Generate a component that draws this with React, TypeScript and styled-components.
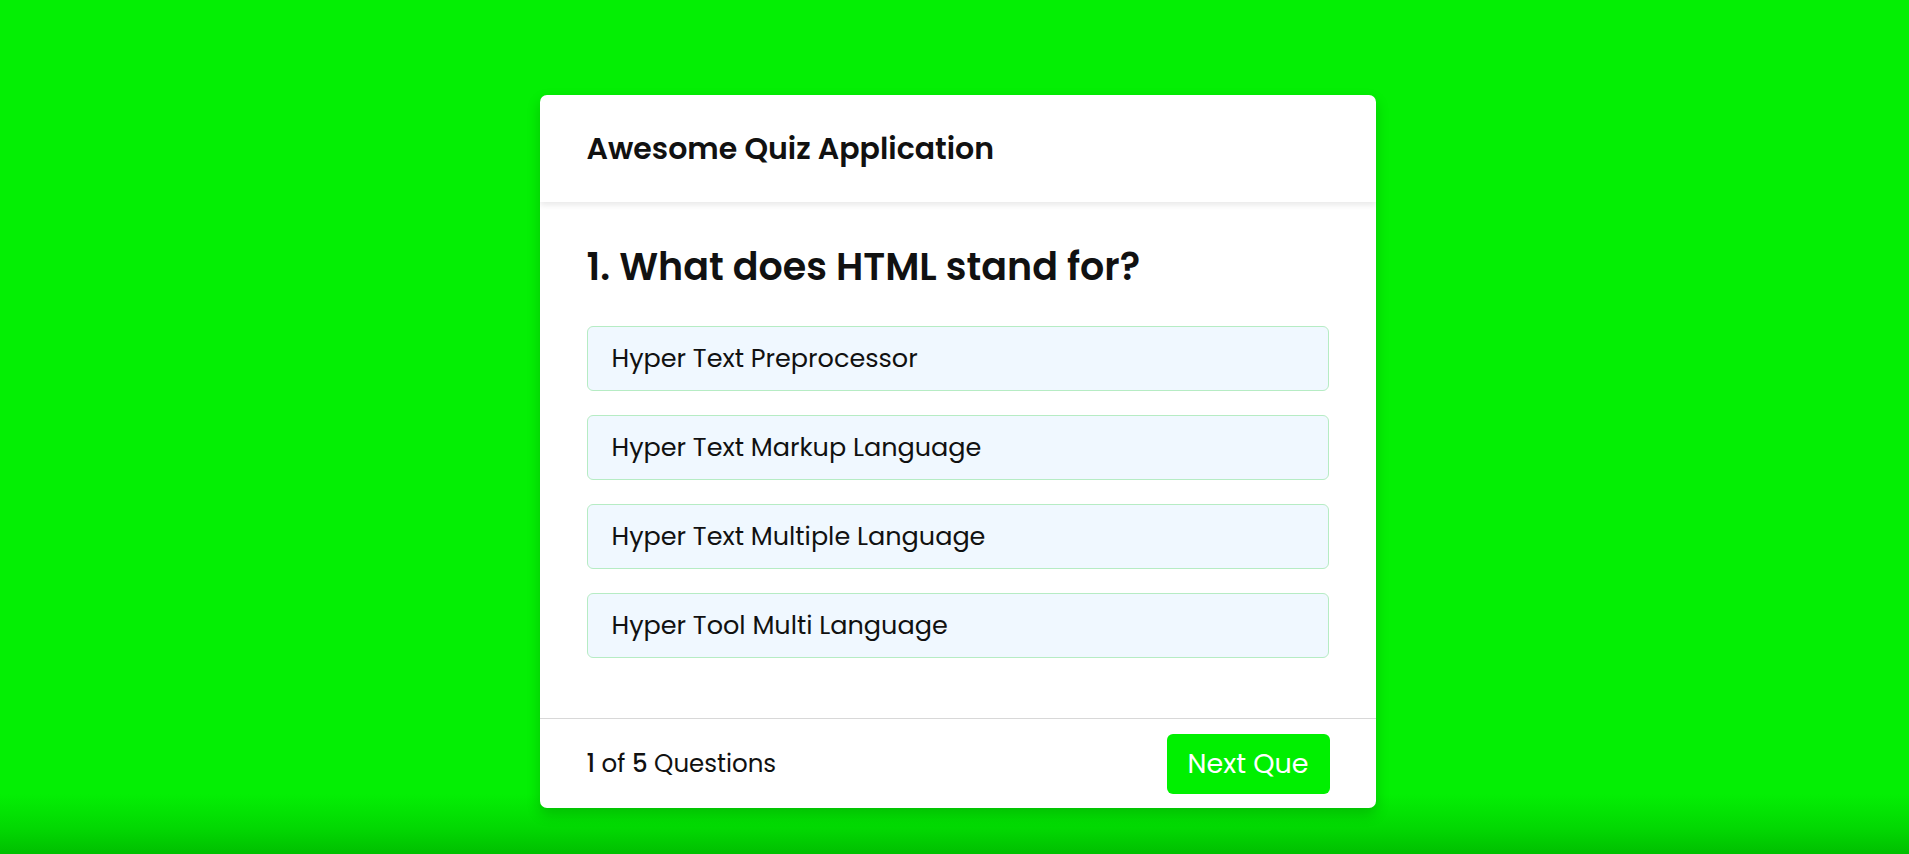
import React from 'react';
import styled, { createGlobalStyle } from 'styled-components';

const GlobalStyle = createGlobalStyle`
  html, body {
    margin: 0;
    padding: 0;
  }
  body {
    min-height: 854px;
    background: linear-gradient(to bottom, #04ef04 0%, #04ef04 93%, #02d802 97%, #00bf00 100%);
    font-family: Poppins, Inter, "Noto Sans", sans-serif;
    color: #111;
  }
`;

const Page = styled.div`
  display: flex;
  justify-content: center;
  align-items: flex-start;
  min-height: 854px;
  box-sizing: border-box;
  padding: 95px 0 0 6px;
`;

const Card = styled.div`
  width: 836px;
  height: 713px;
  background: #fff;
  border-radius: 7px;
  box-shadow: 0 6px 14px rgba(0, 0, 0, 0.18);
  display: flex;
  flex-direction: column;
  overflow: hidden;
`;

const Header = styled.header`
  height: 107px;
  flex-shrink: 0;
  display: flex;
  align-items: center;
  padding: 0 47px;
  box-shadow: 0 3px 6px rgba(0, 0, 0, 0.09);
  position: relative;
  z-index: 1;
`;

const Title = styled.h1`
  margin: 0;
  font-size: 30px;
  font-weight: 600;
`;

const Body = styled.section`
  flex: 1;
  padding: 35px 47px 0;
`;

const Question = styled.h2`
  margin: 0;
  font-size: 38px;
  font-weight: 600;
  line-height: 60px;
`;

const OptionList = styled.ul`
  list-style: none;
  margin: 29px 0 0;
  padding: 0;
  display: flex;
  flex-direction: column;
  gap: 24px;
`;

const Option = styled.li`
  height: 65px;
  box-sizing: border-box;
  display: flex;
  align-items: center;
  padding: 0 24px;
  background: #f0f8ff;
  border: 1px solid #b6ecc4;
  border-radius: 6px;
  font-size: 25.5px;
  font-weight: 400;
  color: #111;
`;

const Footer = styled.footer`
  height: 90px;
  flex-shrink: 0;
  box-sizing: border-box;
  border-top: 1px solid #d8d8d8;
  display: flex;
  align-items: center;
  justify-content: space-between;
  padding: 0 46px 0 47px;
`;

const Counter = styled.span`
  font-size: 24.5px;
  font-weight: 400;
  color: #111;

  b {
    font-weight: 500;
  }
`;

const NextButton = styled.button`
  width: 163px;
  height: 60px;
  border: none;
  border-radius: 6px;
  background: #00f000;
  color: #fff;
  font-family: inherit;
  font-size: 27px;
  font-weight: 400;
  cursor: pointer;
`;

const options = [
  'Hyper Text Preprocessor',
  'Hyper Text Markup Language',
  'Hyper Text Multiple Language',
  'Hyper Tool Multi Language',
];

const App: React.FC = () => {
  return (
    <>
      <GlobalStyle />
      <Page>
        <Card>
          <Header>
            <Title>Awesome Quiz Application</Title>
          </Header>
          <Body>
            <Question>1. What does HTML stand for?</Question>
            <OptionList>
              {options.map((o) => (
                <Option key={o}>{o}</Option>
              ))}
            </OptionList>
          </Body>
          <Footer>
            <Counter>
              <b>1</b> of <b>5</b> Questions
            </Counter>
            <NextButton>Next Que</NextButton>
          </Footer>
        </Card>
      </Page>
    </>
  );
};

export default App;
